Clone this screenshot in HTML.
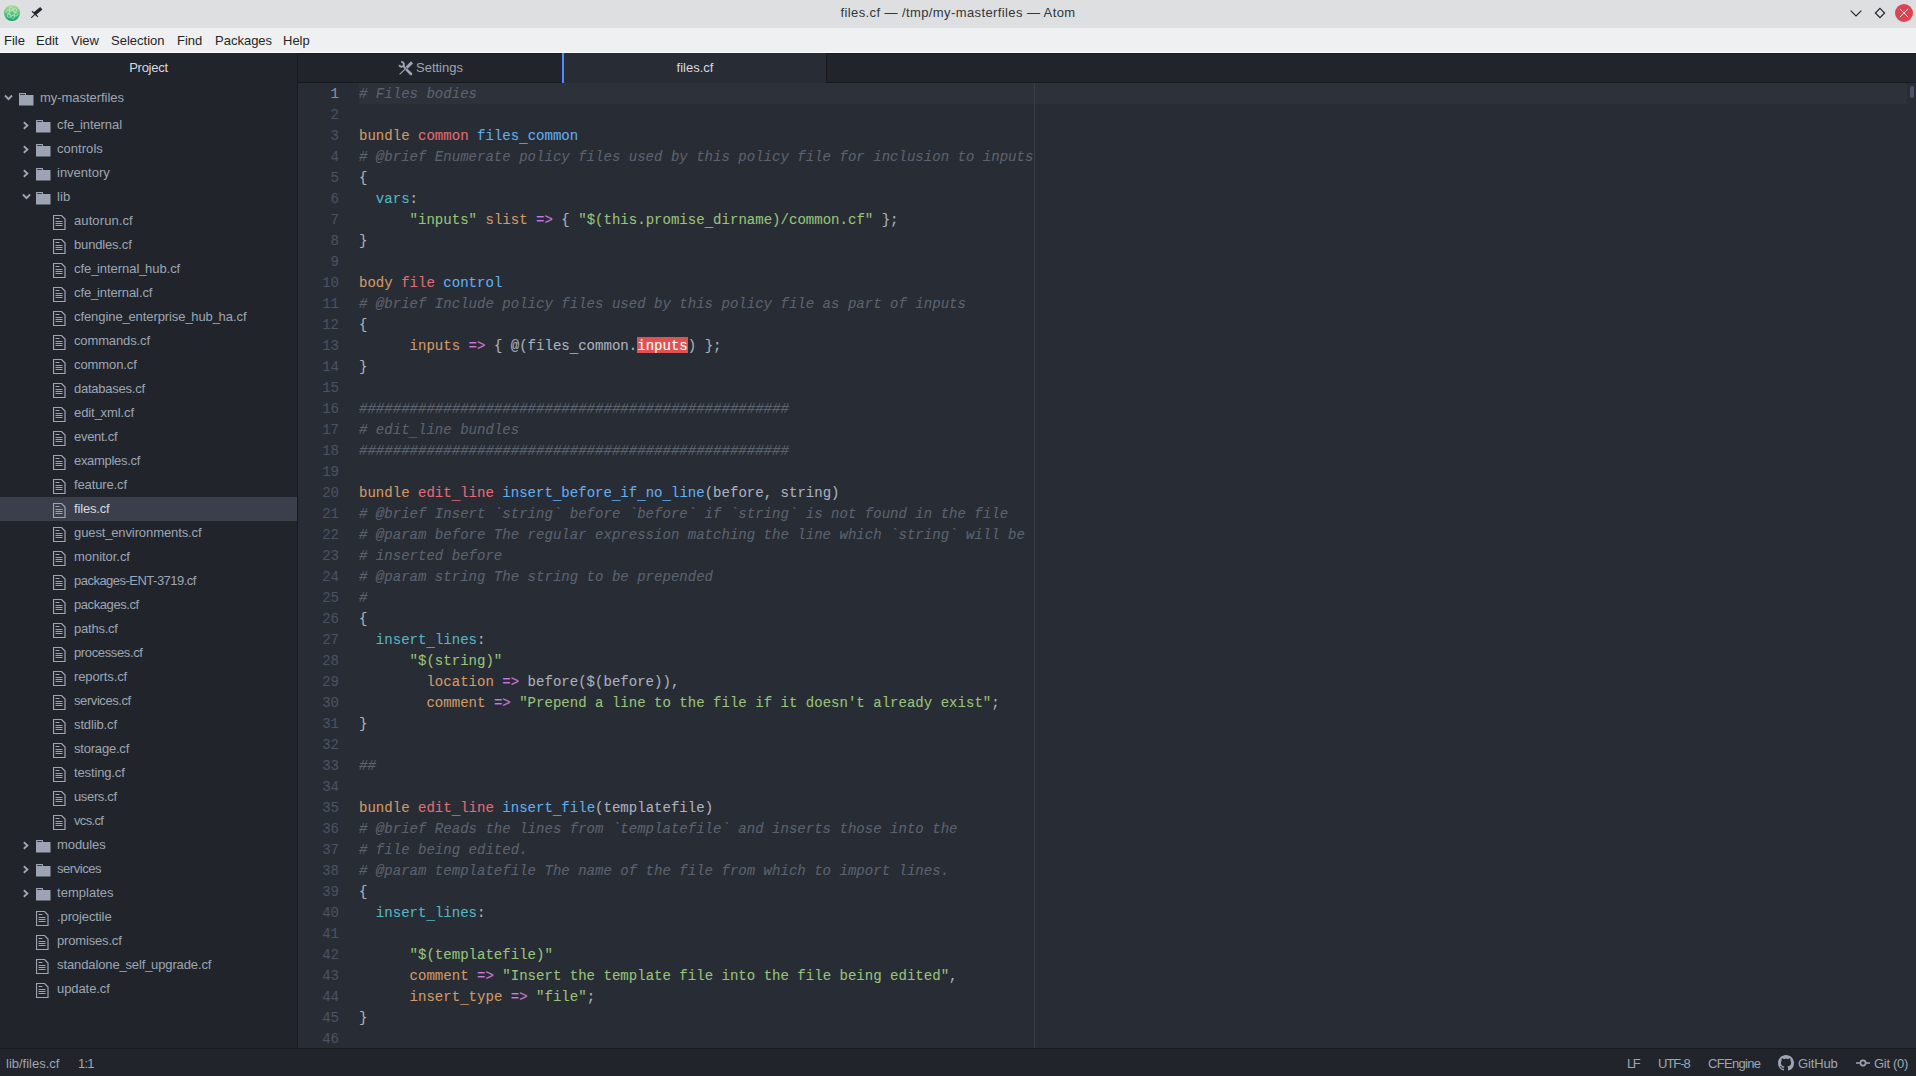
<!DOCTYPE html>
<html><head><meta charset="utf-8">
<style>
*{margin:0;padding:0;box-sizing:border-box}
html,body{width:1916px;height:1076px;overflow:hidden;background:#282c34;font-family:"Liberation Sans",sans-serif}
.abs{position:absolute}
svg{display:block}
.u{letter-spacing:-1.4px}
#title{position:absolute;left:0;top:0;width:1916px;height:28px;background:#dedfe1}
#title .t{position:absolute;left:758px;width:400px;text-align:center;top:5px;font-size:13px;letter-spacing:0.4px;color:#31363b;white-space:nowrap}
#menu{position:absolute;left:0;top:28px;width:1916px;height:25px;background:#eff0f1;border-bottom:1px solid #fcfcfc}
#menu span{position:absolute;top:5px;font-size:13px;color:#232629}
#side{position:absolute;left:0;top:53px;width:297px;height:995px;background:#21252b}
#sidediv{position:absolute;left:297px;top:53px;width:1px;height:995px;background:#181a1f}
#side .hdr{position:absolute;left:0;top:0;width:297px;letter-spacing:-0.25px;height:29px;text-align:center;font-size:13px;line-height:29px;color:#d7dae0}
.sel{position:absolute;left:0;width:297px;height:24px;background:#3a3f4b}
.tt{position:absolute;font-size:13px;line-height:24px;color:#9da5b4;white-space:nowrap}
.tt.st{color:#d7dae0}
#tabs{position:absolute;left:298px;top:53px;width:1618px;height:30px;background:#21252b;border-top:1px solid #181a1f;border-bottom:1px solid #181a1f}
.tab{position:absolute;top:0;height:29px;font-size:13px;line-height:28px;color:#9da5b4;text-align:center}
#tab2{left:264px;top:-1px;width:265px;background:#282c34;color:#d7dae0;border-left:2px solid #528bff;border-right:1px solid #181a1f;height:30px;line-height:29px}
#editor{position:absolute;left:298px;top:83px;width:1618px;height:965px;background:#282c34;overflow:hidden}
.num{position:absolute;left:0;width:41px;-webkit-text-stroke:0.1px currentColor;text-align:right;font-family:"Liberation Mono",monospace;font-size:14.05px;line-height:21px;color:#4b5263}
.num.cur{color:#8a93a3}
.hl{position:absolute;left:61px;top:0;width:1548px;height:21px;background:#2c313a}
.ln{position:absolute;left:61px;white-space:pre;-webkit-text-stroke:0.1px currentColor;font-family:"Liberation Mono",monospace;font-size:14.05px;line-height:21px;color:#abb2bf}
.c{color:#5c6370;font-style:italic}
.k{color:#d19a66}.o{color:#d19a66}
.r{color:#e06c75}.b{color:#61afef}.g{color:#98c379}.p{color:#c678dd}.y{color:#56b6c2}
.i{color:#fff;position:relative}
.i::before{content:"";position:absolute;left:0;right:0;top:-1px;height:16px;background:#e05252;z-index:-1}
.ln{z-index:0}
.us{position:relative;top:2px}
#wrap{position:absolute;left:736px;top:0;width:1px;height:965px;background:#3b4048}
#thumb{position:absolute;left:1612px;top:3px;width:4px;height:12px;border-radius:2px;background:#4b5362}
#status{position:absolute;left:0;top:1048px;width:1916px;height:28px;background:#21252b;border-top:1px solid #181a1f}
#status span{position:absolute;top:7px;font-size:13px;color:#9da5b4;white-space:nowrap}
</style></head><body>
<div id="title">
 <svg class="abs" style="left:3px;top:4px" width="18" height="18" viewBox="0 0 18 18">
  <defs><linearGradient id="ag" x1="0" y1="0" x2="0" y2="1"><stop offset="0" stop-color="#b0e294"/><stop offset="1" stop-color="#0ea36c"/></linearGradient></defs>
  <circle cx="9" cy="9" r="8" fill="url(#ag)"/>
  <g fill="none" stroke="#e2f5dc" stroke-width="0.75" opacity="0.7" transform="rotate(18 9 9)">
   <ellipse cx="9" cy="9" rx="6" ry="2.4"/>
   <ellipse cx="9" cy="9" rx="6" ry="2.4" transform="rotate(60 9 9)"/>
   <ellipse cx="9" cy="9" rx="6" ry="2.4" transform="rotate(-60 9 9)"/>
  </g>
 </svg>
 <svg class="abs" style="left:30px;top:6px" width="13" height="13" viewBox="0 0 13 13">
  <path d="M4.6 7.9L11.3 2.2" stroke="#232629" stroke-width="3.4"/>
  <path d="M2 5.2l5.9 5.5" stroke="#232629" stroke-width="1.2"/>
  <path d="M1.2 11.8L4.8 8.3" stroke="#232629" stroke-width="1.1"/>
 </svg>
 <div class="t">files.cf — /tmp/my-masterfiles — Atom</div>
 <svg class="abs" style="left:1850px;top:10px" width="12" height="7" viewBox="0 0 12 7"><path d="M0.7 0.7l5.3 5.3 5.3-5.3" fill="none" stroke="#232629" stroke-width="1.15"/></svg>
 <svg class="abs" style="left:1874px;top:7px" width="12" height="12" viewBox="0 0 12 12"><path d="M6 1.4l4.6 4.6-4.6 4.6-4.6-4.6z" fill="none" stroke="#232629" stroke-width="1.2"/></svg>
 <svg class="abs" style="left:1895px;top:4px" width="18" height="18" viewBox="0 0 18 18"><circle cx="9" cy="9" r="9" fill="#da4453"/><path d="M4.8 4.8l8.4 8.4M13.2 4.8l-8.4 8.4" stroke="#fcfcfc" stroke-width="0.9"/></svg>
</div>
<div id="menu">
 <span style="left:4px">File</span><span style="left:36px">Edit</span><span style="left:71px">View</span><span style="left:111px">Selection</span><span style="left:177px">Find</span><span style="left:215px">Packages</span><span style="left:283px">Help</span>
</div>
<div id="side">
 <div class="hdr">Project</div>
 <div class="abs" style="left:0;top:-53px">
<div class="abs" style="left:4px;top:94px"><svg class="ch" width="9" height="8" viewBox="0 0 9 8"><path d="M1 1.5l3.5 3.6 3.5-3.6" fill="none" stroke="#9da5b4" stroke-width="1.9"/></svg></div><div class="abs" style="left:19px;top:93px"><svg class="fi" width="15" height="13" viewBox="0 0 15 13"><path d="M0 0h7v2h7.5v10.5h-14.5z" fill="#9da5b4"/><rect x="1" y="1" width="5" height="1" fill="#3a3f4b"/></svg></div><div class="tt" style="left:40px;top:86px;letter-spacing:-0.046px">my-masterfiles</div>
<div class="abs" style="left:22px;top:121px"><svg class="ch" width="8" height="9" viewBox="0 0 8 9"><path d="M1.8 1.2l3.6 3.3-3.6 3.3" fill="none" stroke="#9da5b4" stroke-width="1.9"/></svg></div><div class="abs" style="left:36px;top:120px"><svg class="fi" width="15" height="13" viewBox="0 0 15 13"><path d="M0 0h7v2h7.5v10.5h-14.5z" fill="#9da5b4"/><rect x="1" y="1" width="5" height="1" fill="#3a3f4b"/></svg></div><div class="tt" style="left:57px;top:113px;letter-spacing:-0.08px">cfe<span class="u">_</span>internal</div>
<div class="abs" style="left:22px;top:145px"><svg class="ch" width="8" height="9" viewBox="0 0 8 9"><path d="M1.8 1.2l3.6 3.3-3.6 3.3" fill="none" stroke="#9da5b4" stroke-width="1.9"/></svg></div><div class="abs" style="left:36px;top:144px"><svg class="fi" width="15" height="13" viewBox="0 0 15 13"><path d="M0 0h7v2h7.5v10.5h-14.5z" fill="#9da5b4"/><rect x="1" y="1" width="5" height="1" fill="#3a3f4b"/></svg></div><div class="tt" style="left:57px;top:137px;letter-spacing:0.043px">controls</div>
<div class="abs" style="left:22px;top:169px"><svg class="ch" width="8" height="9" viewBox="0 0 8 9"><path d="M1.8 1.2l3.6 3.3-3.6 3.3" fill="none" stroke="#9da5b4" stroke-width="1.9"/></svg></div><div class="abs" style="left:36px;top:168px"><svg class="fi" width="15" height="13" viewBox="0 0 15 13"><path d="M0 0h7v2h7.5v10.5h-14.5z" fill="#9da5b4"/><rect x="1" y="1" width="5" height="1" fill="#3a3f4b"/></svg></div><div class="tt" style="left:57px;top:161px;letter-spacing:0.0px">inventory</div>
<div class="abs" style="left:22px;top:193px"><svg class="ch" width="9" height="8" viewBox="0 0 9 8"><path d="M1 1.5l3.5 3.6 3.5-3.6" fill="none" stroke="#9da5b4" stroke-width="1.9"/></svg></div><div class="abs" style="left:36px;top:192px"><svg class="fi" width="15" height="13" viewBox="0 0 15 13"><path d="M0 0h7v2h7.5v10.5h-14.5z" fill="#9da5b4"/><rect x="1" y="1" width="5" height="1" fill="#3a3f4b"/></svg></div><div class="tt" style="left:57px;top:185px;letter-spacing:0.1px">lib</div>
<div class="abs" style="left:53px;top:215px"><svg class="fl" width="13" height="15" viewBox="0 0 13 15"><path d="M0.5 0.5h8l3.5 3.5v10.5h-11.5z" fill="none" stroke="#9da5b4" stroke-width="1.2"/><path d="M2.5 3.5h4M2.5 6.5h7M2.5 8.5h7M2.5 10.5h7" stroke="#9da5b4" stroke-width="1"/></svg></div><div class="tt" style="left:74px;top:209px;letter-spacing:0.1px">autorun.cf</div>
<div class="abs" style="left:53px;top:239px"><svg class="fl" width="13" height="15" viewBox="0 0 13 15"><path d="M0.5 0.5h8l3.5 3.5v10.5h-11.5z" fill="none" stroke="#9da5b4" stroke-width="1.2"/><path d="M2.5 3.5h4M2.5 6.5h7M2.5 8.5h7M2.5 10.5h7" stroke="#9da5b4" stroke-width="1"/></svg></div><div class="tt" style="left:74px;top:233px;letter-spacing:-0.167px">bundles.cf</div>
<div class="abs" style="left:53px;top:263px"><svg class="fl" width="13" height="15" viewBox="0 0 13 15"><path d="M0.5 0.5h8l3.5 3.5v10.5h-11.5z" fill="none" stroke="#9da5b4" stroke-width="1.2"/><path d="M2.5 3.5h4M2.5 6.5h7M2.5 8.5h7M2.5 10.5h7" stroke="#9da5b4" stroke-width="1"/></svg></div><div class="tt" style="left:74px;top:257px;letter-spacing:-0.056px">cfe<span class="u">_</span>internal<span class="u">_</span>hub.cf</div>
<div class="abs" style="left:53px;top:287px"><svg class="fl" width="13" height="15" viewBox="0 0 13 15"><path d="M0.5 0.5h8l3.5 3.5v10.5h-11.5z" fill="none" stroke="#9da5b4" stroke-width="1.2"/><path d="M2.5 3.5h4M2.5 6.5h7M2.5 8.5h7M2.5 10.5h7" stroke="#9da5b4" stroke-width="1"/></svg></div><div class="tt" style="left:74px;top:281px;letter-spacing:-0.085px">cfe<span class="u">_</span>internal.cf</div>
<div class="abs" style="left:53px;top:311px"><svg class="fl" width="13" height="15" viewBox="0 0 13 15"><path d="M0.5 0.5h8l3.5 3.5v10.5h-11.5z" fill="none" stroke="#9da5b4" stroke-width="1.2"/><path d="M2.5 3.5h4M2.5 6.5h7M2.5 8.5h7M2.5 10.5h7" stroke="#9da5b4" stroke-width="1"/></svg></div><div class="tt" style="left:74px;top:305px;letter-spacing:-0.076px">cfengine<span class="u">_</span>enterprise<span class="u">_</span>hub<span class="u">_</span>ha.cf</div>
<div class="abs" style="left:53px;top:335px"><svg class="fl" width="13" height="15" viewBox="0 0 13 15"><path d="M0.5 0.5h8l3.5 3.5v10.5h-11.5z" fill="none" stroke="#9da5b4" stroke-width="1.2"/><path d="M2.5 3.5h4M2.5 6.5h7M2.5 8.5h7M2.5 10.5h7" stroke="#9da5b4" stroke-width="1"/></svg></div><div class="tt" style="left:74px;top:329px;letter-spacing:-0.13px">commands.cf</div>
<div class="abs" style="left:53px;top:359px"><svg class="fl" width="13" height="15" viewBox="0 0 13 15"><path d="M0.5 0.5h8l3.5 3.5v10.5h-11.5z" fill="none" stroke="#9da5b4" stroke-width="1.2"/><path d="M2.5 3.5h4M2.5 6.5h7M2.5 8.5h7M2.5 10.5h7" stroke="#9da5b4" stroke-width="1"/></svg></div><div class="tt" style="left:74px;top:353px;letter-spacing:-0.087px">common.cf</div>
<div class="abs" style="left:53px;top:383px"><svg class="fl" width="13" height="15" viewBox="0 0 13 15"><path d="M0.5 0.5h8l3.5 3.5v10.5h-11.5z" fill="none" stroke="#9da5b4" stroke-width="1.2"/><path d="M2.5 3.5h4M2.5 6.5h7M2.5 8.5h7M2.5 10.5h7" stroke="#9da5b4" stroke-width="1"/></svg></div><div class="tt" style="left:74px;top:377px;letter-spacing:-0.236px">databases.cf</div>
<div class="abs" style="left:53px;top:407px"><svg class="fl" width="13" height="15" viewBox="0 0 13 15"><path d="M0.5 0.5h8l3.5 3.5v10.5h-11.5z" fill="none" stroke="#9da5b4" stroke-width="1.2"/><path d="M2.5 3.5h4M2.5 6.5h7M2.5 8.5h7M2.5 10.5h7" stroke="#9da5b4" stroke-width="1"/></svg></div><div class="tt" style="left:74px;top:401px;letter-spacing:-0.078px">edit<span class="u">_</span>xml.cf</div>
<div class="abs" style="left:53px;top:431px"><svg class="fl" width="13" height="15" viewBox="0 0 13 15"><path d="M0.5 0.5h8l3.5 3.5v10.5h-11.5z" fill="none" stroke="#9da5b4" stroke-width="1.2"/><path d="M2.5 3.5h4M2.5 6.5h7M2.5 8.5h7M2.5 10.5h7" stroke="#9da5b4" stroke-width="1"/></svg></div><div class="tt" style="left:74px;top:425px;letter-spacing:-0.286px">event.cf</div>
<div class="abs" style="left:53px;top:455px"><svg class="fl" width="13" height="15" viewBox="0 0 13 15"><path d="M0.5 0.5h8l3.5 3.5v10.5h-11.5z" fill="none" stroke="#9da5b4" stroke-width="1.2"/><path d="M2.5 3.5h4M2.5 6.5h7M2.5 8.5h7M2.5 10.5h7" stroke="#9da5b4" stroke-width="1"/></svg></div><div class="tt" style="left:74px;top:449px;letter-spacing:-0.31px">examples.cf</div>
<div class="abs" style="left:53px;top:479px"><svg class="fl" width="13" height="15" viewBox="0 0 13 15"><path d="M0.5 0.5h8l3.5 3.5v10.5h-11.5z" fill="none" stroke="#9da5b4" stroke-width="1.2"/><path d="M2.5 3.5h4M2.5 6.5h7M2.5 8.5h7M2.5 10.5h7" stroke="#9da5b4" stroke-width="1"/></svg></div><div class="tt" style="left:74px;top:473px;letter-spacing:-0.133px">feature.cf</div>
<div class="sel" style="top:497px"></div><div class="abs" style="left:53px;top:503px"><svg class="fl" width="13" height="15" viewBox="0 0 13 15"><path d="M0.5 0.5h8l3.5 3.5v10.5h-11.5z" fill="none" stroke="#9da5b4" stroke-width="1.2"/><path d="M2.5 3.5h4M2.5 6.5h7M2.5 8.5h7M2.5 10.5h7" stroke="#9da5b4" stroke-width="1"/></svg></div><div class="tt st" style="left:74px;top:497px;letter-spacing:-0.171px">files.cf</div>
<div class="abs" style="left:53px;top:527px"><svg class="fl" width="13" height="15" viewBox="0 0 13 15"><path d="M0.5 0.5h8l3.5 3.5v10.5h-11.5z" fill="none" stroke="#9da5b4" stroke-width="1.2"/><path d="M2.5 3.5h4M2.5 6.5h7M2.5 8.5h7M2.5 10.5h7" stroke="#9da5b4" stroke-width="1"/></svg></div><div class="tt" style="left:74px;top:521px;letter-spacing:-0.095px">guest<span class="u">_</span>environments.cf</div>
<div class="abs" style="left:53px;top:551px"><svg class="fl" width="13" height="15" viewBox="0 0 13 15"><path d="M0.5 0.5h8l3.5 3.5v10.5h-11.5z" fill="none" stroke="#9da5b4" stroke-width="1.2"/><path d="M2.5 3.5h4M2.5 6.5h7M2.5 8.5h7M2.5 10.5h7" stroke="#9da5b4" stroke-width="1"/></svg></div><div class="tt" style="left:74px;top:545px;letter-spacing:-0.044px">monitor.cf</div>
<div class="abs" style="left:53px;top:575px"><svg class="fl" width="13" height="15" viewBox="0 0 13 15"><path d="M0.5 0.5h8l3.5 3.5v10.5h-11.5z" fill="none" stroke="#9da5b4" stroke-width="1.2"/><path d="M2.5 3.5h4M2.5 6.5h7M2.5 8.5h7M2.5 10.5h7" stroke="#9da5b4" stroke-width="1"/></svg></div><div class="tt" style="left:74px;top:569px;letter-spacing:-0.516px">packages-ENT-3719.cf</div>
<div class="abs" style="left:53px;top:599px"><svg class="fl" width="13" height="15" viewBox="0 0 13 15"><path d="M0.5 0.5h8l3.5 3.5v10.5h-11.5z" fill="none" stroke="#9da5b4" stroke-width="1.2"/><path d="M2.5 3.5h4M2.5 6.5h7M2.5 8.5h7M2.5 10.5h7" stroke="#9da5b4" stroke-width="1"/></svg></div><div class="tt" style="left:74px;top:593px;letter-spacing:-0.42px">packages.cf</div>
<div class="abs" style="left:53px;top:623px"><svg class="fl" width="13" height="15" viewBox="0 0 13 15"><path d="M0.5 0.5h8l3.5 3.5v10.5h-11.5z" fill="none" stroke="#9da5b4" stroke-width="1.2"/><path d="M2.5 3.5h4M2.5 6.5h7M2.5 8.5h7M2.5 10.5h7" stroke="#9da5b4" stroke-width="1"/></svg></div><div class="tt" style="left:74px;top:617px;letter-spacing:-0.229px">paths.cf</div>
<div class="abs" style="left:53px;top:647px"><svg class="fl" width="13" height="15" viewBox="0 0 13 15"><path d="M0.5 0.5h8l3.5 3.5v10.5h-11.5z" fill="none" stroke="#9da5b4" stroke-width="1.2"/><path d="M2.5 3.5h4M2.5 6.5h7M2.5 8.5h7M2.5 10.5h7" stroke="#9da5b4" stroke-width="1"/></svg></div><div class="tt" style="left:74px;top:641px;letter-spacing:-0.373px">processes.cf</div>
<div class="abs" style="left:53px;top:671px"><svg class="fl" width="13" height="15" viewBox="0 0 13 15"><path d="M0.5 0.5h8l3.5 3.5v10.5h-11.5z" fill="none" stroke="#9da5b4" stroke-width="1.2"/><path d="M2.5 3.5h4M2.5 6.5h7M2.5 8.5h7M2.5 10.5h7" stroke="#9da5b4" stroke-width="1"/></svg></div><div class="tt" style="left:74px;top:665px;letter-spacing:-0.111px">reports.cf</div>
<div class="abs" style="left:53px;top:695px"><svg class="fl" width="13" height="15" viewBox="0 0 13 15"><path d="M0.5 0.5h8l3.5 3.5v10.5h-11.5z" fill="none" stroke="#9da5b4" stroke-width="1.2"/><path d="M2.5 3.5h4M2.5 6.5h7M2.5 8.5h7M2.5 10.5h7" stroke="#9da5b4" stroke-width="1"/></svg></div><div class="tt" style="left:74px;top:689px;letter-spacing:-0.42px">services.cf</div>
<div class="abs" style="left:53px;top:719px"><svg class="fl" width="13" height="15" viewBox="0 0 13 15"><path d="M0.5 0.5h8l3.5 3.5v10.5h-11.5z" fill="none" stroke="#9da5b4" stroke-width="1.2"/><path d="M2.5 3.5h4M2.5 6.5h7M2.5 8.5h7M2.5 10.5h7" stroke="#9da5b4" stroke-width="1"/></svg></div><div class="tt" style="left:74px;top:713px;letter-spacing:-0.125px">stdlib.cf</div>
<div class="abs" style="left:53px;top:743px"><svg class="fl" width="13" height="15" viewBox="0 0 13 15"><path d="M0.5 0.5h8l3.5 3.5v10.5h-11.5z" fill="none" stroke="#9da5b4" stroke-width="1.2"/><path d="M2.5 3.5h4M2.5 6.5h7M2.5 8.5h7M2.5 10.5h7" stroke="#9da5b4" stroke-width="1"/></svg></div><div class="tt" style="left:74px;top:737px;letter-spacing:-0.2px">storage.cf</div>
<div class="abs" style="left:53px;top:767px"><svg class="fl" width="13" height="15" viewBox="0 0 13 15"><path d="M0.5 0.5h8l3.5 3.5v10.5h-11.5z" fill="none" stroke="#9da5b4" stroke-width="1.2"/><path d="M2.5 3.5h4M2.5 6.5h7M2.5 8.5h7M2.5 10.5h7" stroke="#9da5b4" stroke-width="1"/></svg></div><div class="tt" style="left:74px;top:761px;letter-spacing:-0.133px">testing.cf</div>
<div class="abs" style="left:53px;top:791px"><svg class="fl" width="13" height="15" viewBox="0 0 13 15"><path d="M0.5 0.5h8l3.5 3.5v10.5h-11.5z" fill="none" stroke="#9da5b4" stroke-width="1.2"/><path d="M2.5 3.5h4M2.5 6.5h7M2.5 8.5h7M2.5 10.5h7" stroke="#9da5b4" stroke-width="1"/></svg></div><div class="tt" style="left:74px;top:785px;letter-spacing:-0.357px">users.cf</div>
<div class="abs" style="left:53px;top:815px"><svg class="fl" width="13" height="15" viewBox="0 0 13 15"><path d="M0.5 0.5h8l3.5 3.5v10.5h-11.5z" fill="none" stroke="#9da5b4" stroke-width="1.2"/><path d="M2.5 3.5h4M2.5 6.5h7M2.5 8.5h7M2.5 10.5h7" stroke="#9da5b4" stroke-width="1"/></svg></div><div class="tt" style="left:74px;top:809px;letter-spacing:-0.68px">vcs.cf</div>
<div class="abs" style="left:22px;top:841px"><svg class="ch" width="8" height="9" viewBox="0 0 8 9"><path d="M1.8 1.2l3.6 3.3-3.6 3.3" fill="none" stroke="#9da5b4" stroke-width="1.9"/></svg></div><div class="abs" style="left:36px;top:840px"><svg class="fi" width="15" height="13" viewBox="0 0 15 13"><path d="M0 0h7v2h7.5v10.5h-14.5z" fill="#9da5b4"/><rect x="1" y="1" width="5" height="1" fill="#3a3f4b"/></svg></div><div class="tt" style="left:57px;top:833px;letter-spacing:-0.067px">modules</div>
<div class="abs" style="left:22px;top:865px"><svg class="ch" width="8" height="9" viewBox="0 0 8 9"><path d="M1.8 1.2l3.6 3.3-3.6 3.3" fill="none" stroke="#9da5b4" stroke-width="1.9"/></svg></div><div class="abs" style="left:36px;top:864px"><svg class="fi" width="15" height="13" viewBox="0 0 15 13"><path d="M0 0h7v2h7.5v10.5h-14.5z" fill="#9da5b4"/><rect x="1" y="1" width="5" height="1" fill="#3a3f4b"/></svg></div><div class="tt" style="left:57px;top:857px;letter-spacing:-0.457px">services</div>
<div class="abs" style="left:22px;top:889px"><svg class="ch" width="8" height="9" viewBox="0 0 8 9"><path d="M1.8 1.2l3.6 3.3-3.6 3.3" fill="none" stroke="#9da5b4" stroke-width="1.9"/></svg></div><div class="abs" style="left:36px;top:888px"><svg class="fi" width="15" height="13" viewBox="0 0 15 13"><path d="M0 0h7v2h7.5v10.5h-14.5z" fill="#9da5b4"/><rect x="1" y="1" width="5" height="1" fill="#3a3f4b"/></svg></div><div class="tt" style="left:57px;top:881px;letter-spacing:0.025px">templates</div>
<div class="abs" style="left:36px;top:911px"><svg class="fl" width="13" height="15" viewBox="0 0 13 15"><path d="M0.5 0.5h8l3.5 3.5v10.5h-11.5z" fill="none" stroke="#9da5b4" stroke-width="1.2"/><path d="M2.5 3.5h4M2.5 6.5h7M2.5 8.5h7M2.5 10.5h7" stroke="#9da5b4" stroke-width="1"/></svg></div><div class="tt" style="left:57px;top:905px;letter-spacing:-0.1px">.projectile</div>
<div class="abs" style="left:36px;top:935px"><svg class="fl" width="13" height="15" viewBox="0 0 13 15"><path d="M0.5 0.5h8l3.5 3.5v10.5h-11.5z" fill="none" stroke="#9da5b4" stroke-width="1.2"/><path d="M2.5 3.5h4M2.5 6.5h7M2.5 8.5h7M2.5 10.5h7" stroke="#9da5b4" stroke-width="1"/></svg></div><div class="tt" style="left:57px;top:929px;letter-spacing:-0.17px">promises.cf</div>
<div class="abs" style="left:36px;top:959px"><svg class="fl" width="13" height="15" viewBox="0 0 13 15"><path d="M0.5 0.5h8l3.5 3.5v10.5h-11.5z" fill="none" stroke="#9da5b4" stroke-width="1.2"/><path d="M2.5 3.5h4M2.5 6.5h7M2.5 8.5h7M2.5 10.5h7" stroke="#9da5b4" stroke-width="1"/></svg></div><div class="tt" style="left:57px;top:953px;letter-spacing:-0.109px">standalone<span class="u">_</span>self<span class="u">_</span>upgrade.cf</div>
<div class="abs" style="left:36px;top:983px"><svg class="fl" width="13" height="15" viewBox="0 0 13 15"><path d="M0.5 0.5h8l3.5 3.5v10.5h-11.5z" fill="none" stroke="#9da5b4" stroke-width="1.2"/><path d="M2.5 3.5h4M2.5 6.5h7M2.5 8.5h7M2.5 10.5h7" stroke="#9da5b4" stroke-width="1"/></svg></div><div class="tt" style="left:57px;top:977px;letter-spacing:-0.075px">update.cf</div>
 </div>
</div>
<div id="sidediv"></div>
<div id="tabs">
 <div class="tab" style="left:0;width:264px">
  <svg class="abs" style="left:98px;top:5px" width="20" height="18" viewBox="0 0 20 18"><path d="M16 3.4L10.6 8.8" stroke="#9da5b4" stroke-width="2.9"/><path d="M10.2 9.2L3.6 15.4" stroke="#9da5b4" stroke-width="1.1"/><path d="M10.8 10.8L15 15" stroke="#9da5b4" stroke-width="2.6" stroke-linecap="round"/><path d="M5.2 3.13A2.3 2.3 0 1 1 3.33 5.8" fill="none" stroke="#9da5b4" stroke-width="1.9"/><path d="M7.2 7.2L9.5 9.5" stroke="#9da5b4" stroke-width="1.8"/></svg>
  <span class="abs" style="left:118px;top:0">Settings</span>
 </div>
 <div class="tab" id="tab2">files.cf</div>
</div>
<div id="editor">
 <div class="hl"></div>
 <div id="wrap"></div>
 <div id="thumb"></div>
 <div class="abs" style="left:0;top:-82px">
<div class="num cur" style="top:83px">1</div>
<div class="num" style="top:104px">2</div>
<div class="num" style="top:125px">3</div>
<div class="num" style="top:146px">4</div>
<div class="num" style="top:167px">5</div>
<div class="num" style="top:188px">6</div>
<div class="num" style="top:209px">7</div>
<div class="num" style="top:230px">8</div>
<div class="num" style="top:251px">9</div>
<div class="num" style="top:272px">10</div>
<div class="num" style="top:293px">11</div>
<div class="num" style="top:314px">12</div>
<div class="num" style="top:335px">13</div>
<div class="num" style="top:356px">14</div>
<div class="num" style="top:377px">15</div>
<div class="num" style="top:398px">16</div>
<div class="num" style="top:419px">17</div>
<div class="num" style="top:440px">18</div>
<div class="num" style="top:461px">19</div>
<div class="num" style="top:482px">20</div>
<div class="num" style="top:503px">21</div>
<div class="num" style="top:524px">22</div>
<div class="num" style="top:545px">23</div>
<div class="num" style="top:566px">24</div>
<div class="num" style="top:587px">25</div>
<div class="num" style="top:608px">26</div>
<div class="num" style="top:629px">27</div>
<div class="num" style="top:650px">28</div>
<div class="num" style="top:671px">29</div>
<div class="num" style="top:692px">30</div>
<div class="num" style="top:713px">31</div>
<div class="num" style="top:734px">32</div>
<div class="num" style="top:755px">33</div>
<div class="num" style="top:776px">34</div>
<div class="num" style="top:797px">35</div>
<div class="num" style="top:818px">36</div>
<div class="num" style="top:839px">37</div>
<div class="num" style="top:860px">38</div>
<div class="num" style="top:881px">39</div>
<div class="num" style="top:902px">40</div>
<div class="num" style="top:923px">41</div>
<div class="num" style="top:944px">42</div>
<div class="num" style="top:965px">43</div>
<div class="num" style="top:986px">44</div>
<div class="num" style="top:1007px">45</div>
<div class="num" style="top:1028px">46</div>
<div class="ln" style="top:83px"><span class="c"># Files bodies</span></div>
<div class="ln" style="top:104px"></div>
<div class="ln" style="top:125px"><span class="k">bundle</span> <span class="r">common</span> <span class="b">files<span class="us">_</span>common</span></div>
<div class="ln" style="top:146px"><span class="c"># @brief Enumerate policy files used by this policy file for inclusion to inputs</span></div>
<div class="ln" style="top:167px">{</div>
<div class="ln" style="top:188px">  <span class="y">vars</span>:</div>
<div class="ln" style="top:209px">      <span class="g">&quot;inputs&quot;</span> <span class="o">slist</span> <span class="p">=&gt;</span> { <span class="g">&quot;$(this.promise<span class="us">_</span>dirname)/common.cf&quot;</span> };</div>
<div class="ln" style="top:230px">}</div>
<div class="ln" style="top:251px"></div>
<div class="ln" style="top:272px"><span class="k">body</span> <span class="r">file</span> <span class="b">control</span></div>
<div class="ln" style="top:293px"><span class="c"># @brief Include policy files used by this policy file as part of inputs</span></div>
<div class="ln" style="top:314px">{</div>
<div class="ln" style="top:335px">      <span class="o">inputs</span> <span class="p">=&gt;</span> { @(files<span class="us">_</span>common.<span class="i">inputs</span>) };</div>
<div class="ln" style="top:356px">}</div>
<div class="ln" style="top:377px"></div>
<div class="ln" style="top:398px"><span class="c">###################################################</span></div>
<div class="ln" style="top:419px"><span class="c"># edit<span class="us">_</span>line bundles</span></div>
<div class="ln" style="top:440px"><span class="c">###################################################</span></div>
<div class="ln" style="top:461px"></div>
<div class="ln" style="top:482px"><span class="k">bundle</span> <span class="r">edit<span class="us">_</span>line</span> <span class="b">insert<span class="us">_</span>before<span class="us">_</span>if<span class="us">_</span>no<span class="us">_</span>line</span>(before, string)</div>
<div class="ln" style="top:503px"><span class="c"># @brief Insert `string` before `before` if `string` is not found in the file</span></div>
<div class="ln" style="top:524px"><span class="c"># @param before The regular expression matching the line which `string` will be</span></div>
<div class="ln" style="top:545px"><span class="c"># inserted before</span></div>
<div class="ln" style="top:566px"><span class="c"># @param string The string to be prepended</span></div>
<div class="ln" style="top:587px"><span class="c">#</span></div>
<div class="ln" style="top:608px">{</div>
<div class="ln" style="top:629px">  <span class="y">insert<span class="us">_</span>lines</span>:</div>
<div class="ln" style="top:650px">      <span class="g">&quot;$(string)&quot;</span></div>
<div class="ln" style="top:671px">        <span class="o">location</span> <span class="p">=&gt;</span> before($(before)),</div>
<div class="ln" style="top:692px">        <span class="o">comment</span> <span class="p">=&gt;</span> <span class="g">&quot;Prepend a line to the file if it doesn&#x27;t already exist&quot;</span>;</div>
<div class="ln" style="top:713px">}</div>
<div class="ln" style="top:734px"></div>
<div class="ln" style="top:755px"><span class="c">##</span></div>
<div class="ln" style="top:776px"></div>
<div class="ln" style="top:797px"><span class="k">bundle</span> <span class="r">edit<span class="us">_</span>line</span> <span class="b">insert<span class="us">_</span>file</span>(templatefile)</div>
<div class="ln" style="top:818px"><span class="c"># @brief Reads the lines from `templatefile` and inserts those into the</span></div>
<div class="ln" style="top:839px"><span class="c"># file being edited.</span></div>
<div class="ln" style="top:860px"><span class="c"># @param templatefile The name of the file from which to import lines.</span></div>
<div class="ln" style="top:881px">{</div>
<div class="ln" style="top:902px">  <span class="y">insert<span class="us">_</span>lines</span>:</div>
<div class="ln" style="top:923px"></div>
<div class="ln" style="top:944px">      <span class="g">&quot;$(templatefile)&quot;</span></div>
<div class="ln" style="top:965px">      <span class="o">comment</span> <span class="p">=&gt;</span> <span class="g">&quot;Insert the template file into the file being edited&quot;</span>,</div>
<div class="ln" style="top:986px">      <span class="o">insert<span class="us">_</span>type</span> <span class="p">=&gt;</span> <span class="g">&quot;file&quot;</span>;</div>
<div class="ln" style="top:1007px">}</div>
<div class="ln" style="top:1028px"></div>
 </div>
</div>
<div id="status">
 <span style="left:6px">lib/files.cf</span><span style="left:78px;letter-spacing:-0.8px">1:1</span>
 <span style="left:1627px;letter-spacing:-1.5px">LF</span><span style="left:1658px;letter-spacing:-1px">UTF-8</span><span style="left:1708px;letter-spacing:-0.7px">CFEngine</span>
 <svg class="abs" style="left:1778px;top:6px" width="16" height="16" viewBox="0 0 16 16"><path fill="#9da5b4" d="M8 0C3.58 0 0 3.58 0 8c0 3.54 2.29 6.53 5.47 7.59.4.07.55-.17.55-.38 0-.19-.01-.82-.01-1.49-2.01.37-2.53-.49-2.69-.94-.09-.23-.48-.94-.82-1.13-.28-.15-.68-.52-.01-.53.63-.01 1.08.58 1.23.82.72 1.21 1.87.87 2.33.66.07-.52.28-.87.51-1.07-1.78-.2-3.64-.89-3.64-3.95 0-.87.31-1.59.82-2.15-.08-.2-.36-1.02.08-2.12 0 0 .67-.21 2.2.82.64-.18 1.32-.27 2-.27.68 0 1.36.09 2 .27 1.53-1.04 2.2-.82 2.2-.82.44 1.1.16 1.92.08 2.12.51.56.82 1.27.82 2.15 0 3.07-1.87 3.75-3.65 3.95.29.25.54.73.54 1.48 0 1.07-.01 1.93-.01 2.2 0 .21.15.46.55.38A8.013 8.013 0 0016 8c0-4.42-3.58-8-8-8z"/></svg>
 <span style="left:1798px;letter-spacing:-0.15px">GitHub</span>
 <svg class="abs" style="left:1856px;top:9px" width="14" height="10" viewBox="0 0 14 10"><circle cx="7" cy="5" r="2.6" fill="none" stroke="#9da5b4" stroke-width="1.6"/><path d="M0 5h4.2M9.8 5H14" stroke="#9da5b4" stroke-width="1.6"/></svg>
 <span style="left:1874px;letter-spacing:-0.3px">Git (0)</span>
</div>
</body></html>
